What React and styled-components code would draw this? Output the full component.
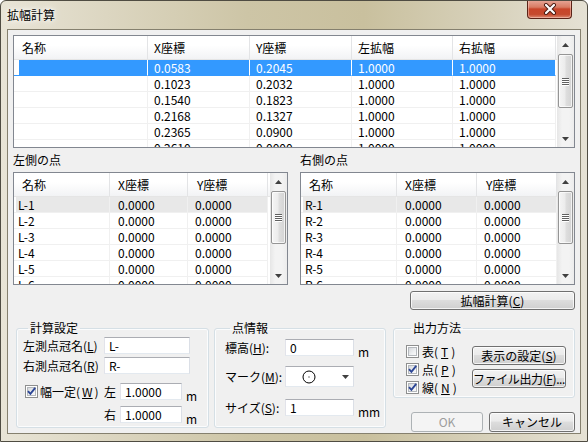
import React from 'react';
import styled, { createGlobalStyle } from 'styled-components';

const GlobalStyle = createGlobalStyle`
  html, body {
    margin: 0;
    padding: 0;
    background: #ffffff;
  }
  body {
    font-family: "Noto Sans CJK JP", "Noto Sans", sans-serif;
    font-size: 12px;
    color: #000;
  }
  * {
    box-sizing: border-box;
  }
`;

const Window = styled.div`
  width: 588px;
  height: 442px;
  display: flex;
  flex-direction: column;
  padding: 0 6px 7px;
  border: 1px solid #4f4c42;
  border-radius: 6px 6px 0 0;
  background: linear-gradient(to right, #e8e4d6 0%, #dcd6c1 18%, #cdc5a6 42%, #c9c09e 62%, #d8d2bc 84%, #e5e1d4 100%);
  overflow: hidden;
`;

const TitleBar = styled.div`
  height: 28px;
  flex-shrink: 0;
  display: flex;
  justify-content: space-between;
  align-items: flex-start;
`;

const TitleText = styled.div`
  margin-top: 6px;
  line-height: 16px;
  text-shadow: 0 0 4px #fff, 0 0 8px #fff;
`;

const CloseButton = styled.div`
  width: 45px;
  height: 19px;
  margin-top: -1px;
  margin-right: 9px;
  display: flex;
  align-items: center;
  justify-content: center;
  border: 1px solid #5a2317;
  border-top: none;
  border-radius: 0 0 4px 4px;
  background: linear-gradient(#e8a899 0%, #d87b63 40%, #c8452a 50%, #c54a2e 80%, #dc8a72 100%);
  box-shadow: inset 0 0 0 1px rgba(255, 220, 210, 0.45);
`;

const Client = styled.div`
  flex: 1;
  display: flex;
  flex-direction: column;
  padding: 5px 5px 1px;
  background: #f0f0f0;
  border: 1px solid #85806e;
`;

/* ---------- list view ---------- */

const ListView = styled.div`
  height: 113px;
  display: flex;
  border: 1px solid #828790;
  background: #fff;
  overflow: hidden;
`;

const ListMain = styled.div`
  flex: 1;
  min-width: 0;
  display: flex;
  flex-direction: column;
  overflow: hidden;
`;

const HeaderRow = styled.div`
  height: 24px;
  flex-shrink: 0;
  display: flex;
  border-bottom: 1px solid #e5e5e5;
  background: linear-gradient(#ffffff 0%, #ffffff 40%, #f2f3f5 100%);
`;

const HeaderCell = styled.div`
  width: ${p => p.$w}px;
  flex-shrink: 0;
  padding-left: ${p => p.$pad}px;
  line-height: 23px;
  border-right: 1px solid #e3e4e6;
  white-space: nowrap;
`;

const Row = styled.div`
  height: 16px;
  flex-shrink: 0;
  display: flex;
`;

const Cell = styled.div`
  width: ${p => p.$w}px;
  flex-shrink: 0;
  padding-left: ${p => p.$pad}px;
  line-height: 15px;
  white-space: nowrap;
  overflow: hidden;
  color: ${p => (p.$tone === 'blue' ? '#ffffff' : '#000000')};
  border-bottom: 1px solid ${p => (p.$tone === 'blue' ? '#3399ff' : '#f0f0f0')};
  border-right: 1px solid ${p => (p.$tone === 'blue' ? '#ffffff' : '#f0f0f0')};
  background: ${p =>
    p.$tone === 'blue' ? '#3399ff' : p.$tone === 'gray' ? '#e8e8e8' : 'transparent'};
  &:first-child {
    background: ${p =>
      p.$tone === 'blue'
        ? `linear-gradient(to right, #ffffff ${p.$offset}px, #3399ff ${p.$offset}px)`
        : p.$tone === 'gray'
        ? `linear-gradient(to right, #ffffff ${p.$offset}px, #e8e8e8 ${p.$offset}px)`
        : 'transparent'};
  }
`;

const ScrollBar = styled.div`
  width: 17px;
  flex-shrink: 0;
  display: flex;
  flex-direction: column;
  background: linear-gradient(to right, #e6e6e6 0%, #f3f3f3 30%, #f3f3f3 70%, #ececec 100%);
`;

const ArrowBtn = styled.div`
  height: 17px;
  flex-shrink: 0;
  display: flex;
  align-items: center;
  justify-content: center;
`;

const Thumb = styled.div`
  height: ${p => p.$h}px;
  margin: 1px 1px 0 1px;
  flex-shrink: 0;
  display: flex;
  flex-direction: column;
  align-items: center;
  justify-content: center;
  gap: 1px;
  border: 1px solid #959595;
  border-radius: 2px;
  background: linear-gradient(to right, #f5f5f5 0%, #ececec 45%, #dedede 55%, #d3d3d3 100%);
  box-shadow: inset 0 0 0 1px rgba(255, 255, 255, 0.7);
`;

const Grip = styled.span`
  width: 7px;
  height: 1px;
  background: #606060;
  box-shadow: 0 1px 0 #ffffff;
`;

const Spacer = styled.div`
  flex: 1;
`;

const Arrow = ({ down }) => (
  <svg width="7" height="4" viewBox="0 0 7 4">
    <polygon points={down ? '0,0 7,0 3.5,4' : '0,4 7,4 3.5,0'} fill="#404040" />
  </svg>
);

const VScroll = ({ thumb }) => (
  <ScrollBar>
    <ArrowBtn>
      <Arrow />
    </ArrowBtn>
    <Thumb $h={thumb}>
      <Grip />
      <Grip />
      <Grip />
      <Grip />
    </Thumb>
    <Spacer />
    <ArrowBtn>
      <Arrow down />
    </ArrowBtn>
  </ScrollBar>
);

const ListTable = ({ cols, headers, headPad, cellPad, rows, sel, tone, offset, thumb }) => (
  <ListView>
    <ListMain>
      <HeaderRow>
        {headers.map((h, i) => (
          <HeaderCell key={h} $w={cols[i]} $pad={headPad[i]}>
            {h}
          </HeaderCell>
        ))}
      </HeaderRow>
      {rows.map((r, ri) => (
        <Row key={ri}>
          {r.map((c, ci) => (
            <Cell
              key={ci}
              $w={cols[ci]}
              $pad={cellPad[ci]}
              $tone={ri === sel ? tone : 'none'}
              $offset={offset}
            >
              {c}
            </Cell>
          ))}
        </Row>
      ))}
    </ListMain>
    <VScroll thumb={thumb} />
  </ListView>
);

/* ---------- form controls ---------- */

const SideGrid = styled.div`
  display: grid;
  grid-template-columns: 275px 275px;
  column-gap: 12px;
  margin-top: 4px;
`;

const SideLabel = styled.div`
  line-height: 16px;
  margin-bottom: 4px;
`;

const ActionRow = styled.div`
  display: flex;
  justify-content: flex-end;
  margin-top: 6px;
`;

const Button = styled.button`
  width: ${p => p.$w}px;
  height: ${p => p.$h}px;
  padding: 0;
  font: inherit;
  font-size: 12px;
  line-height: 14px;
  color: #000;
  white-space: nowrap;
  letter-spacing: ${p => p.$ls || 0}px;
  border: 1px solid #707070;
  border-radius: 3px;
  background: linear-gradient(#f2f2f2 0%, #ebebeb 45%, #dddddd 50%, #cfcfcf 100%);
  box-shadow: inset 0 0 0 1px rgba(255, 255, 255, 0.75);
  &:disabled {
    color: #9d9d9d;
    border-color: #adb2b5;
    background: #f4f4f4;
    box-shadow: none;
  }
`;

const BottomRow = styled.div`
  display: flex;
  align-items: flex-start;
  height: 111px;
  margin-top: 11px;
  padding-left: 3px;
`;

const GroupBox = styled.fieldset`
  width: ${p => p.$w}px;
  height: ${p => p.$h}px;
  margin: 0 0 0 ${p => p.$ml || 0}px;
  min-width: 0;
  padding: ${p => p.$pad};
  border: 1px solid #d5dfe5;
  border-radius: 3px;
  box-shadow: inset 0 0 0 1px #fbfcfd;
`;

const Legend = styled.legend`
  margin-left: 5px;
  padding: 0 2px;
  line-height: 14px;
`;

const FormRow = styled.div`
  display: flex;
  align-items: center;
  height: ${p => p.$h || 17}px;
  margin-top: ${p => p.$mt || 0}px;
`;

const FieldLabel = styled.span`
  width: ${p => p.$w}px;
  flex-shrink: 0;
  white-space: nowrap;
  display: flex;
  align-items: center;
`;

const TextBox = styled.input`
  width: ${p => p.$w}px;
  height: 17px;
  padding: 0 4px;
  margin: 0;
  font: inherit;
  font-size: 12px;
  color: #000;
  background: #fff;
  border: 1px solid;
  border-color: #abadb3 #dbdfe6 #e3e9ef #e2e3ea;
  border-radius: 0;
  outline: none;
`;

const Unit = styled.span`
  align-self: flex-end;
  margin-left: 4px;
  line-height: 12px;
  margin-bottom: -2px;
`;

const Combo = styled.div`
  width: 69px;
  height: 21px;
  display: flex;
  align-items: center;
  padding: 0 4px 0 16px;
  background: #fff;
  border: 1px solid;
  border-color: #abadb3 #dbdfe6 #e3e9ef #e2e3ea;
`;

const CheckBoxBox = styled.span`
  position: relative;
  width: 13px;
  height: 13px;
  flex-shrink: 0;
  padding: 1px;
  display: inline-flex;
  border: 1px solid #8e8f8f;
  background: #fff;
`;

const CheckInner = styled.span`
  flex: 1;
  border: 1px solid #b4b8bd;
  background: linear-gradient(135deg, #d6d8db 0%, #eef0f2 60%, #fafafa 100%);
`;

const CheckMark = styled.svg`
  position: absolute;
  left: 0;
  top: 0;
`;

const CheckBox = ({ checked }) => (
  <CheckBoxBox>
    <CheckInner />
    {checked && (
      <CheckMark width="11" height="11" viewBox="0 0 11 11">
        <path d="M2 5.2 L4.4 7.8 L9.2 1.8" stroke="#2c4696" strokeWidth="1.9" fill="none" />
      </CheckMark>
    )}
  </CheckBoxBox>
);

const CheckItem = styled.label`
  display: flex;
  align-items: center;
  gap: ${p => p.$gap || 3}px;
  height: 13px;
  margin-top: ${p => p.$mt || 0}px;
  white-space: nowrap;
`;

const OutputBody = styled.div`
  display: flex;
`;

const CheckColumn = styled.div`
  width: 66px;
  display: flex;
  flex-direction: column;
`;

const ButtonColumn = styled.div`
  display: flex;
  flex-direction: column;
  gap: 4px;
  margin-top: 1px;
`;

const RightColumn = styled.div`
  width: 182px;
  margin-left: 7px;
  display: flex;
  flex-direction: column;
`;

const DialogButtons = styled.div`
  display: flex;
  justify-content: flex-end;
  gap: 6px;
  margin-top: 14px;
`;

/* ---------- data ---------- */

const topRows = [
  ['', '0.0583', '0.2045', '1.0000', '1.0000'],
  ['', '0.1023', '0.2032', '1.0000', '1.0000'],
  ['', '0.1540', '0.1823', '1.0000', '1.0000'],
  ['', '0.2168', '0.1327', '1.0000', '1.0000'],
  ['', '0.2365', '0.0900', '1.0000', '1.0000'],
  ['', '0.2610', '0.0000', '1.0000', '1.0000'],
];

const sideRows = prefix =>
  [1, 2, 3, 4, 5, 6].map(n => [`${prefix}-${n}`, '0.0000', '0.0000']);

export default function App() {
  return (
    <>
      <GlobalStyle />
      <Window>
        <TitleBar>
          <TitleText>拡幅計算</TitleText>
          <CloseButton>
            <svg width="14" height="12" viewBox="0 0 14 12">
              <path d="M3 2 L11 10 M11 2 L3 10" stroke="#4a1a10" strokeWidth="4" strokeLinecap="round" />
              <path d="M3 2 L11 10 M11 2 L3 10" stroke="#ffffff" strokeWidth="2.2" strokeLinecap="round" />
            </svg>
          </CloseButton>
        </TitleBar>

        <Client>
          <ListTable
            cols={[134, 102, 102, 101, 103]}
            headers={['名称', 'X座標', 'Y座標', '左拡幅', '右拡幅']}
            headPad={[8, 6, 6, 6, 6]}
            cellPad={[8, 6, 6, 6, 6]}
            rows={topRows}
            sel={0}
            tone="blue"
            offset={5}
            thumb={54}
          />

          <SideGrid>
            <div>
              <SideLabel>左側の点</SideLabel>
              <ListTable
                cols={[96, 78, 80]}
                headers={['名称', 'X座標', 'Y座標']}
                headPad={[8, 8, 9]}
                cellPad={[4, 8, 7]}
                rows={sideRows('L')}
                sel={0}
                tone="gray"
                offset={2}
                thumb={53}
              />
            </div>
            <div>
              <SideLabel>右側の点</SideLabel>
              <ListTable
                cols={[96, 80, 80]}
                headers={['名称', 'X座標', 'Y座標']}
                headPad={[8, 8, 9]}
                cellPad={[4, 8, 7]}
                rows={sideRows('R')}
                sel={0}
                tone="gray"
                offset={2}
                thumb={53}
              />
            </div>
          </SideGrid>

          <ActionRow>
            <Button $w={165} $h={19}>
              拡幅計算(<u>C</u>)
            </Button>
          </ActionRow>

          <BottomRow>
            <GroupBox $w={193} $h={107} $pad="2px 0 0 6px">
              <Legend>計算設定</Legend>
              <FormRow>
                <FieldLabel $w={81}>
                  左測点冠名(<u>L</u>)
                </FieldLabel>
                <TextBox $w={86} defaultValue="L-" readOnly />
              </FormRow>
              <FormRow $mt={3}>
                <FieldLabel $w={81}>
                  右測点冠名(<u>R</u>)
                </FieldLabel>
                <TextBox $w={86} defaultValue="R-" readOnly />
              </FormRow>
              <FormRow $mt={9}>
                <FieldLabel $w={81}>
                  <CheckItem $gap={2} style={{ marginLeft: 2 }}>
                    <CheckBox checked />
                    幅一定(<u>W</u>)
                  </CheckItem>
                </FieldLabel>
                <FieldLabel $w={16}>左</FieldLabel>
                <TextBox $w={62} defaultValue="1.0000" readOnly />
                <Unit>m</Unit>
              </FormRow>
              <FormRow $mt={6}>
                <FieldLabel $w={81} />
                <FieldLabel $w={16}>右</FieldLabel>
                <TextBox $w={62} defaultValue="1.0000" readOnly />
                <Unit>m</Unit>
              </FormRow>
            </GroupBox>

            <GroupBox $w={172} $h={107} $ml={5} $pad="4px 0 0 10px">
              <Legend>点情報</Legend>
              <FormRow>
                <FieldLabel $w={60}>
                  標高(<u>H</u>):
                </FieldLabel>
                <TextBox $w={69} defaultValue="0" readOnly />
                <Unit>m</Unit>
              </FormRow>
              <FormRow $mt={10} $h={21}>
                <FieldLabel $w={60}>
                  マーク(<u>M</u>):
                </FieldLabel>
                <Combo>
                  <svg width="14" height="14" viewBox="0 0 14 14">
                    <circle cx="7" cy="7" r="6" stroke="#000" strokeWidth="1" fill="none" />
                    <rect x="6.5" y="6.5" width="1" height="1" fill="#000" />
                  </svg>
                  <Spacer />
                  <Arrow down />
                </Combo>
              </FormRow>
              <FormRow $mt={12}>
                <FieldLabel $w={60}>
                  サイズ(<u>S</u>):
                </FieldLabel>
                <TextBox $w={69} defaultValue="1" readOnly />
                <Unit>mm</Unit>
              </FormRow>
            </GroupBox>

            <RightColumn>
              <GroupBox $w={182} $h={77} $pad="10px 0 0 12px">
                <Legend>出力方法</Legend>
                <OutputBody>
                  <CheckColumn>
                    <CheckItem>
                      <CheckBox />
                      表(<u>T</u>)
                    </CheckItem>
                    <CheckItem $mt={5}>
                      <CheckBox checked />
                      点(<u>P</u>)
                    </CheckItem>
                    <CheckItem $mt={5}>
                      <CheckBox checked />
                      線(<u>N</u>)
                    </CheckItem>
                  </CheckColumn>
                  <ButtonColumn>
                    <Button $w={94} $h={19}>
                      表示の設定(<u>S</u>)
                    </Button>
                    <Button $w={94} $h={19} $ls={-0.4}>
                      ファイル出力(<u>F</u>)...
                    </Button>
                  </ButtonColumn>
                </OutputBody>
              </GroupBox>
              <DialogButtons>
                <Button $w={72} $h={20} disabled>
                  OK
                </Button>
                <Button $w={86} $h={20}>
                  キャンセル
                </Button>
              </DialogButtons>
            </RightColumn>
          </BottomRow>
        </Client>
      </Window>
    </>
  );
}
